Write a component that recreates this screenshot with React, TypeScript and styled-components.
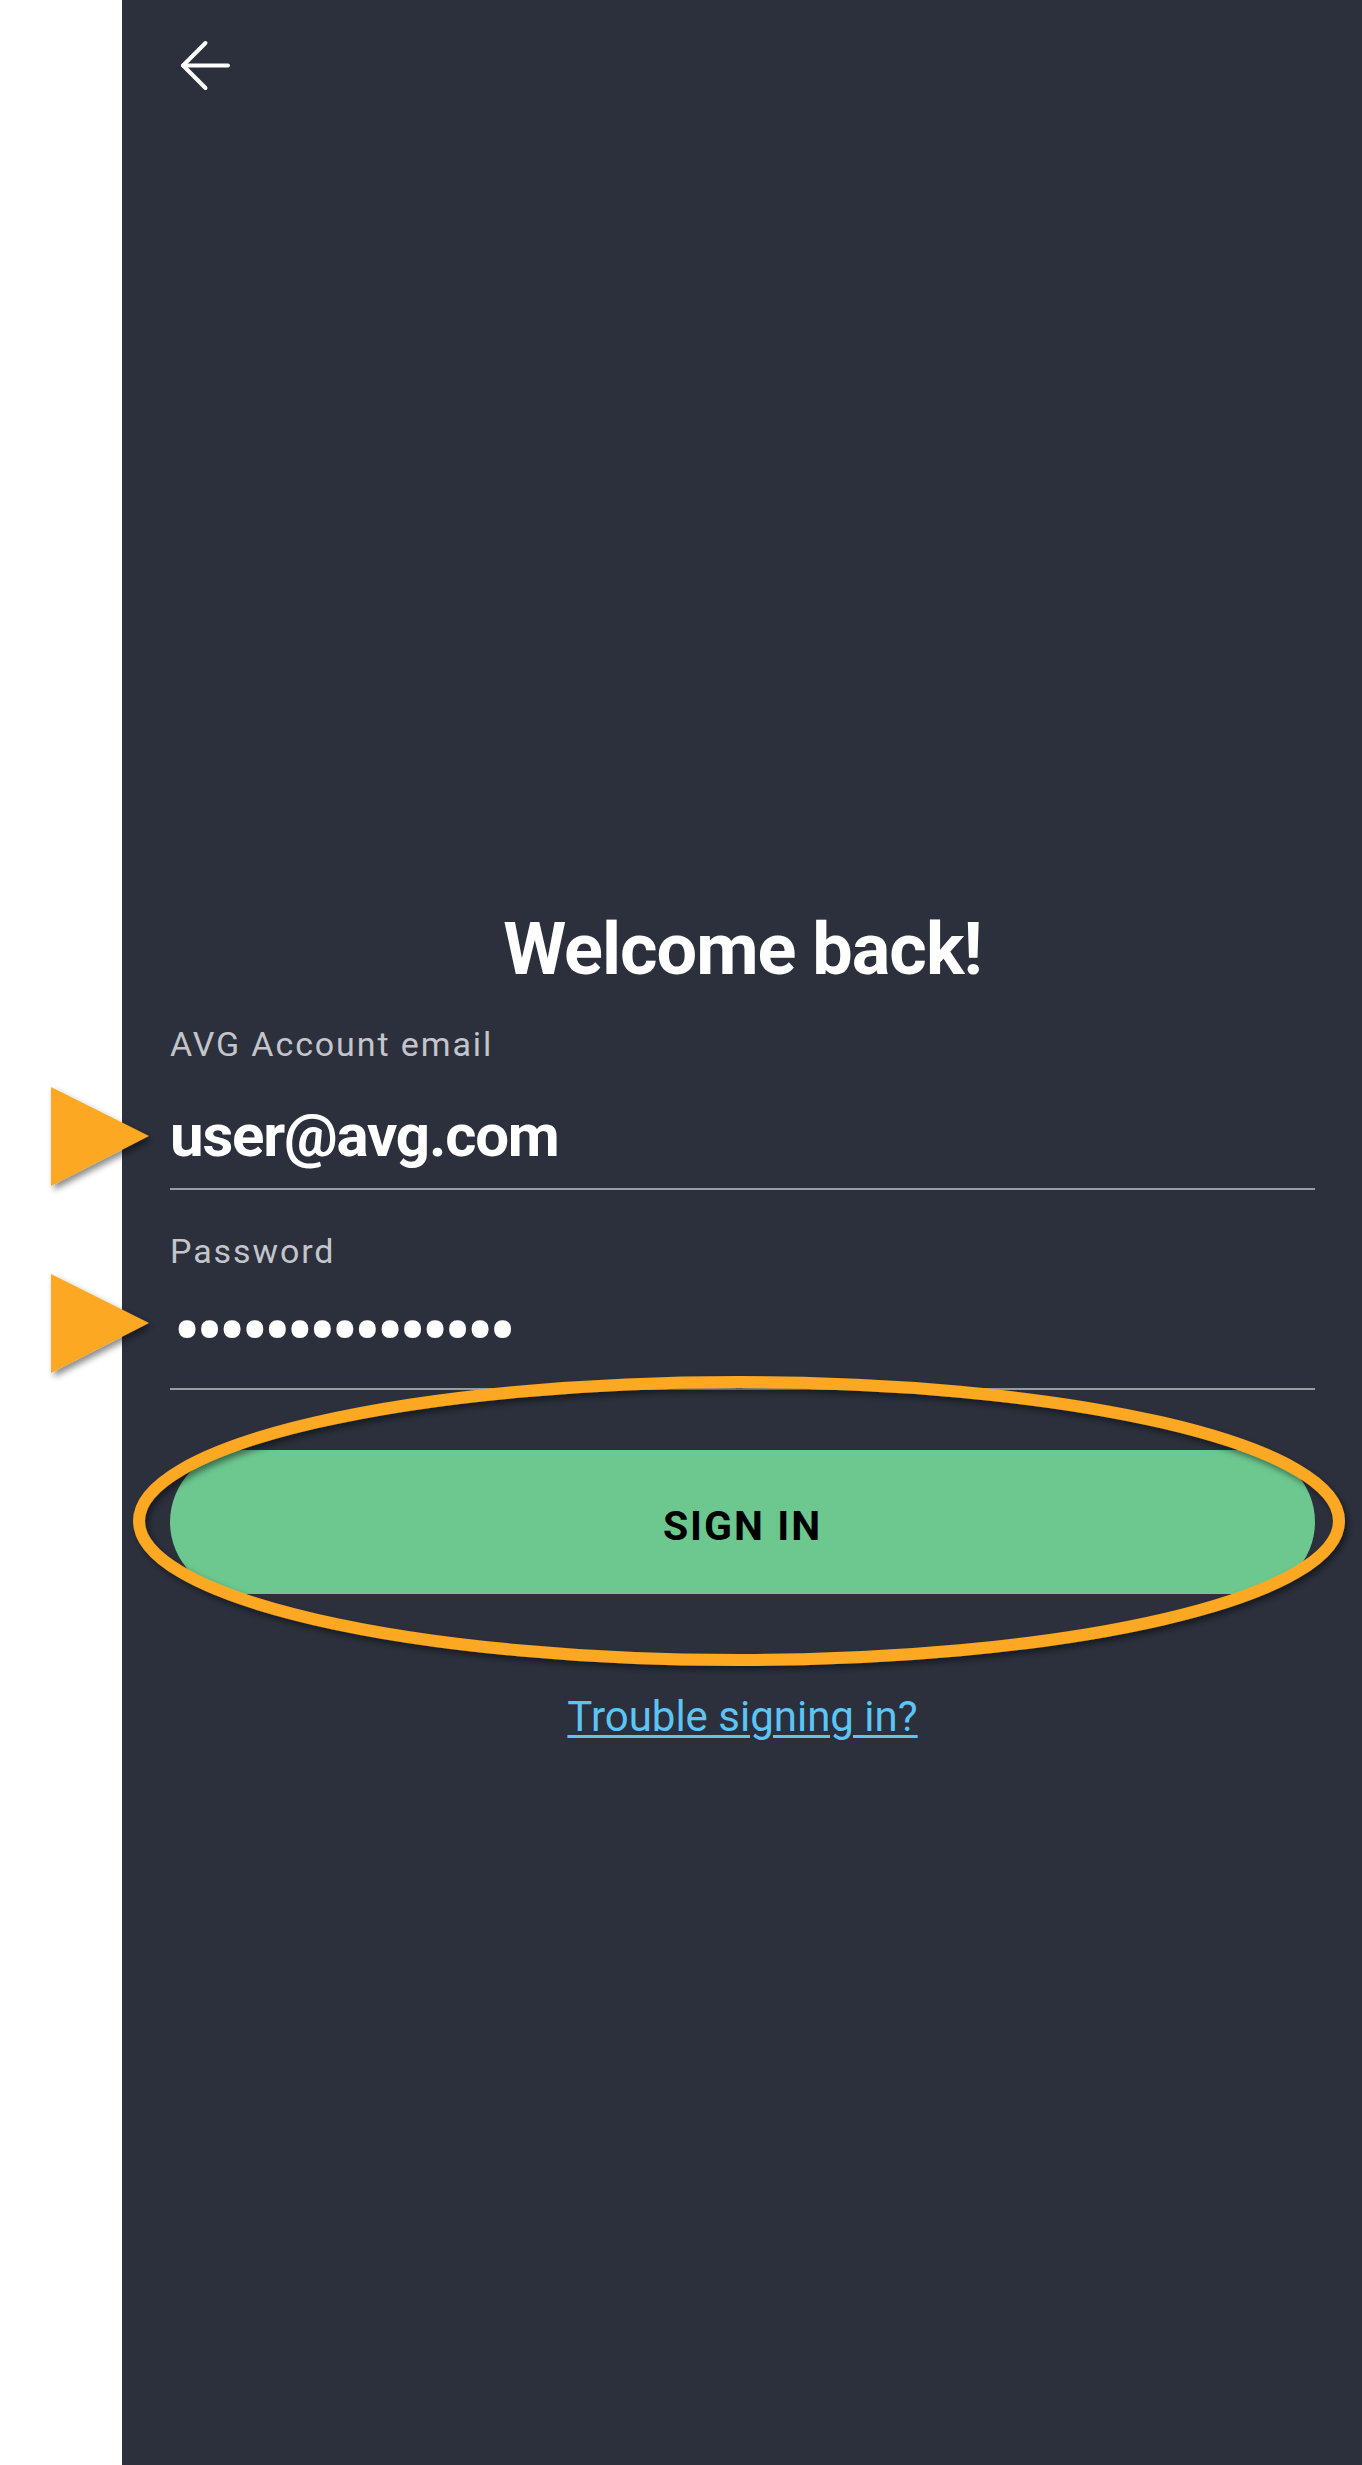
import React from 'react';
import styled, { createGlobalStyle } from 'styled-components';
import { ArrowLeft } from 'lucide-react';

const GlobalStyle = createGlobalStyle`
  html, body {
    margin: 0;
    padding: 0;
    background: #ffffff;
  }
  * {
    box-sizing: border-box;
  }
`;

const Page = styled.div`
  display: flex;
  width: 1362px;
  height: 2465px;
  background: #ffffff;
  font-family: Roboto, 'Liberation Sans', sans-serif;
`;

const Gutter = styled.div`
  width: 122px;
  flex-shrink: 0;
  background: #ffffff;
`;

const Panel = styled.main`
  flex: 1;
  display: flex;
  flex-direction: column;
  background: #2b303c;
`;

const TopBar = styled.header`
  display: flex;
  align-items: center;
  height: 130px;
  padding: 0 0 0 45px;
`;

const BackButton = styled.button`
  display: flex;
  padding: 0;
  border: none;
  background: transparent;
  color: #ffffff;
  cursor: pointer;
`;

const Form = styled.form`
  display: flex;
  flex-direction: column;
  padding: 0 47px 0 48px;
  margin-top: 776px;
`;

const Title = styled.h1`
  margin: 0;
  font-size: 72px;
  line-height: 88px;
  font-weight: 700;
  letter-spacing: -1px;
  color: #ffffff;
  text-align: center;
`;

const FieldLabel = styled.label<{ $gap: number }>`
  margin-top: ${p => p.$gap}px;
  font-size: 34px;
  line-height: 40px;
  letter-spacing: 1.9px;
  color: #c3c5cb;
`;

const Field = styled.div<{ $gap: number; $pad: number }>`
  position: relative;
  margin-top: ${p => p.$gap}px;
  padding-bottom: ${p => p.$pad}px;
  border-bottom: 2px solid #9a9ca3;
`;

const Value = styled.div`
  font-size: 60px;
  line-height: 72px;
  font-weight: 700;
  letter-spacing: -1.2px;
  color: #ffffff;
  white-space: nowrap;
`;

const Dots = styled.div`
  font-size: 84px;
  line-height: 72px;
  color: #ffffff;
  letter-spacing: -5.8px;
  padding-left: 3px;
  white-space: nowrap;
`;

const Pointer = styled.svg<{ $top: number }>`
  position: absolute;
  left: -119px;
  top: ${p => p.$top}px;
  overflow: visible;
`;

const ButtonWrap = styled.div`
  position: relative;
  margin-top: 60px;
`;

const SignInButton = styled.button`
  width: 100%;
  height: 144px;
  padding: 7px 0 0;
  border: none;
  border-radius: 72px;
  background: #6cc88f;
  color: #000000;
  font-family: Roboto, 'Liberation Sans', sans-serif;
  font-size: 41px;
  font-weight: 700;
  letter-spacing: 2px;
  cursor: pointer;
`;

const Highlight = styled.svg`
  position: absolute;
  left: -37px;
  top: -74px;
  overflow: visible;
  pointer-events: none;
`;

const TroubleLink = styled.a`
  align-self: center;
  margin-top: 98px;
  font-size: 42px;
  line-height: 50px;
  color: #5ec4f5;
  text-decoration: underline;
  text-decoration-thickness: 3px;
  text-underline-offset: 4px;
  cursor: pointer;
`;

const Arrow: React.FC<{ top: number; id: string }> = ({ top, id }) => (
  <Pointer $top={top} width="98" height="99" viewBox="0 0 98 99">
    <defs>
      <filter id={id} x="-20%" y="-20%" width="150%" height="150%">
        <feDropShadow dx="3" dy="4" stdDeviation="3" floodColor="#000" floodOpacity="0.45" />
      </filter>
    </defs>
    <polygon points="0,0 98,49 0,99" fill="#fca823" filter={`url(#${id})`} />
  </Pointer>
);

export default function App() {
  return (
    <>
      <GlobalStyle />
      <Page>
        <Gutter />
        <Panel>
          <TopBar>
            <BackButton type="button" aria-label="Back">
              <ArrowLeft size={77} strokeWidth={1.25} />
            </BackButton>
          </TopBar>
          <Form onSubmit={e => e.preventDefault()}>
            <Title>Welcome back!</Title>
            <FieldLabel $gap={30}>AVG Account email</FieldLabel>
            <Field $gap={36} $pad={16}>
              <Arrow id="ptr1" top={-13} />
              <Value>user@avg.com</Value>
            </Field>
            <FieldLabel $gap={41}>Password</FieldLabel>
            <Field $gap={25} $pad={20}>
              <Arrow id="ptr2" top={-22} />
              <Dots>•••••••••••••••</Dots>
            </Field>
            <ButtonWrap>
              <SignInButton type="submit">SIGN IN</SignInButton>
              <Highlight width="1212" height="290" viewBox="0 0 1212 290">
                <defs>
                  <filter id="ring" x="-5%" y="-10%" width="110%" height="125%">
                    <feDropShadow dx="3" dy="4" stdDeviation="3" floodColor="#000" floodOpacity="0.45" />
                  </filter>
                </defs>
                <ellipse cx="606" cy="145" rx="600" ry="139" fill="none" stroke="#fca823" strokeWidth="12" filter="url(#ring)" />
              </Highlight>
            </ButtonWrap>
            <TroubleLink>Trouble signing in?</TroubleLink>
          </Form>
        </Panel>
      </Page>
    </>
  );
}
